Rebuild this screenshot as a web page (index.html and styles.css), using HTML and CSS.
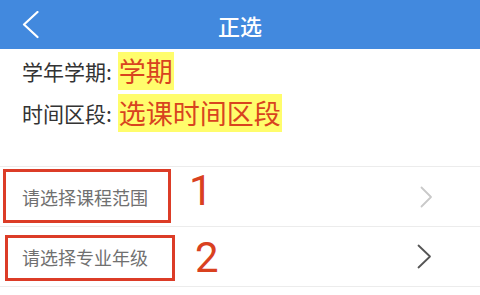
FILE: index.html
```html
<!DOCTYPE html>
<html lang="zh-CN">
<head>
<meta charset="utf-8">
<title>正选</title>
<link rel="stylesheet" href="styles.css">
</head>
<body>
<header class="topbar">
  <a class="back" aria-label="返回">
    <svg width="18" height="28" viewBox="0 0 18 28"><polyline points="15.5,1 2,13.5 15.5,26" fill="none" stroke="#fff" stroke-width="2.2" stroke-linecap="round" stroke-linejoin="round"/></svg>
  </a>
  <h1 class="title">正选</h1>
  <span class="spacer"></span>
</header>

<section class="info">
  <div class="info-line"><span class="label">学年学期:</span><span class="value">学期</span></div>
  <div class="info-line"><span class="label">时间区段:</span><span class="value">选课时间区段</span></div>
</section>

<ul class="list">
  <li class="row">
    <span class="row-text">请选择课程范围</span>
    <svg class="chev chev-light" width="13" height="22" viewBox="0 0 13 22"><polyline points="1.5,1.5 11,11 1.5,20.5" fill="none" stroke="#c9c9c9" stroke-width="1.8" stroke-linecap="round" stroke-linejoin="round"/></svg>
    <span class="mark mark-1"></span>
    <span class="num num-1">1</span>
  </li>
  <li class="row">
    <span class="row-text">请选择专业年级</span>
    <svg class="chev chev-dark" width="15" height="25" viewBox="0 0 15 25"><polyline points="1.5,1.5 13,12.5 1.5,23.5" fill="none" stroke="#555" stroke-width="1.8" stroke-linecap="round" stroke-linejoin="round"/></svg>
    <span class="mark mark-2"></span>
    <span class="num num-2">2</span>
  </li>
</ul>
</body>
</html>
```

FILE: styles.css
```css
* { box-sizing: border-box; }
html, body { margin: 0; padding: 0; background: #fff; }
body {
  width: 480px;
  height: 295px;
  overflow: hidden;
  font-family: "Noto Sans CJK SC", "Noto Sans", sans-serif;
}

.topbar {
  height: 49px;
  background: #4289de;
  display: grid;
  grid-template-columns: 1fr auto 1fr;
  align-items: center;
}
.back {
  display: flex;
  align-items: center;
  padding-left: 22px;
  height: 100%;
}
.back svg { display: block; }
.title {
  margin: 0;
  color: #fff;
  font-size: 22px;
  font-weight: 500;
  line-height: 1;
}

.info {
  padding: 1px 0 0 22px;
}
.info-line {
  height: 42px;
  display: flex;
  align-items: center;
}
.label {
  font-size: 21px;
  color: #333;
  margin-right: 6px;
}
.value {
  display: inline-block;
  font-size: 27px;
  line-height: 38px;
  color: #d8431f;
  background: #fffd6c;
  padding: 0 1px;
}

.list {
  list-style: none;
  margin: 32px 0 0;
  padding: 0;
  border-bottom: 1px solid #ececec;
}
.row {
  position: relative;
  height: 60px;
  border-top: 1px solid #ececec;
  display: flex;
  align-items: center;
  justify-content: space-between;
  padding: 0 47px 0 22px;
}
.row-text {
  font-size: 18px;
  color: #707070;
}
.chev { display: block; }
.chev-dark { margin-right: 1px; }

.mark {
  position: absolute;
  border: 3px solid #dc3c27;
}
.mark-1 { left: 3px; top: 2px; width: 168px; height: 54px; }
.mark-2 { left: 5px; top: 8px; width: 170px; height: 46px; }

.num {
  position: absolute;
  font-family: Roboto, "Noto Sans", sans-serif;
  font-size: 42px;
  line-height: 42px;
  color: #d9411f;
}
.num-1 { left: 189px; top: 3px; }
.num-2 { left: 195px; top: 10px; }
```
